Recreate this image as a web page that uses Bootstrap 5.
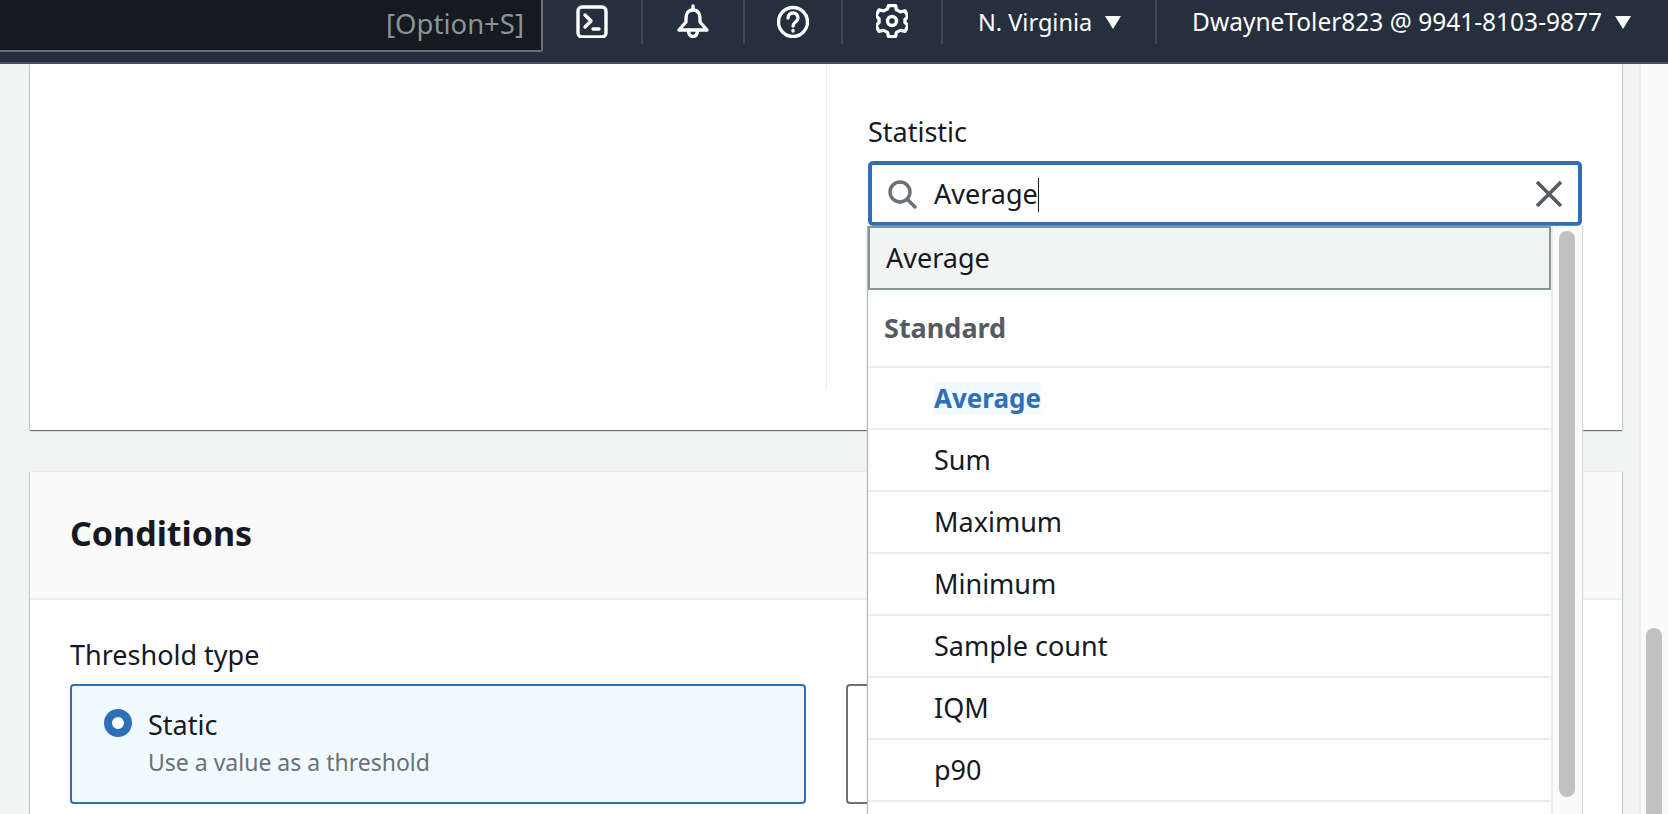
<!DOCTYPE html>
<html lang="en">
<head>
<meta charset="utf-8">
<title>Create alarm</title>
<link rel="stylesheet" href="https://cdn.jsdelivr.net/npm/bootstrap@5.3.0/dist/css/bootstrap.min.css">
<style>
html,body{height:814px;overflow:hidden}
body{font-family:"Noto Sans","Open Sans",sans-serif;font-size:27px;color:#16191f;background:#f2f3f3}
.top-bar{height:64px;background:#252f3e;border-bottom:2px solid #4a5360;color:#fff}
.search-stub{width:543px;height:52px;background:#16191f;border:2px solid #687078;border-width:0 2px 2px 0;border-bottom-right-radius:3px;color:#879596;padding-right:17px;padding-bottom:2px;font-size:27.5px}
.bar-cell{height:44px;border-right:2px solid #414750}
.bar-w1{width:100px}.bar-w2{width:102px}.bar-w3{width:98px}.bar-w4{width:100px}.bar-w5{width:214px;padding-left:35px}
.bar-user{flex:1;height:44px}
.bar-text{font-size:23.5px;line-height:44px;white-space:nowrap}
.bar-name{font-size:24.5px;padding-left:35px}
.caret-down{width:0;height:0;border-left:8.5px solid transparent;border-right:8.5px solid transparent;border-top:13px solid #fff;margin-left:13px}
.page-area{height:750px;overflow:hidden}
.main-col{flex:1;padding:0 17px 0 30px;min-width:0}
.page-track{width:29px;background:#fafafa;border-left:2px solid #eaeded}
.page-thumb{width:16px;height:200px;margin:564px 0 0 5px;background:#c1c1c1;border-radius:8px}
.sheet{background:#fff;box-shadow:0 1px 1px 0 #687078,-1px 0 1px 0 #d5dbdb,1px 0 1px 0 #d5dbdb}
.sheet-top{height:366px;margin-bottom:42px}
.left-half{width:797px;height:326px;border-right:1px solid #eaeded}
.right-half{flex:1;padding:50px 40px 0 41px}
.field-label{line-height:36px;margin-bottom:11px}
.combo{height:65px;border:4px solid #2f6fb5;border-radius:5px;background:#fff;padding:0 15px}
.combo-text{margin-left:17px;line-height:36px;flex:1}
.caret-bar{display:inline-block;width:1.5px;height:34px;background:#16191f;vertical-align:-8px}
.drop{position:absolute;left:0;right:0;top:100%;height:700px;background:#fff;z-index:5;box-shadow:-1px 0 1px #aab7b8,1px 0 1px #d5dbdb}
.drop-list{flex:1;min-width:0}
.drop-filter{height:64px;background:#f2f3f3;border:2px solid #879596;padding-left:16px;line-height:60px}
.drop-group{height:78px;padding:0 0 0 16px;line-height:76px;font-weight:700;color:#545b64;border-bottom:2px solid #eaeded}
.drop-item{height:62px;padding-left:66px;line-height:60px;border-bottom:2px solid #eaeded}
.item-hit{background:#f1faff;color:#2f6fb5;font-weight:700;font-size:26px;display:inline-block;line-height:32px}
.drop-track{width:31px;background:#fafafa;border-left:2px solid #eaeded;flex:none}
.drop-thumb{width:16px;height:566px;margin:5px 0 0 6px;background:#c1c1c1;border-radius:8px}
.sheet-head{height:128px;background:#fafafa;border-bottom:2px solid #eaeded;padding:0 40px 4px;font-size:34px;font-weight:700}
.sheet-body{padding:37px 40px 0;height:400px}
.field-gap{margin-bottom:11px}
.pick-row{gap:40px}
.pick-box{width:736px;height:120px;border:2px solid #2f6fb5;border-radius:4px;background:#f1faff;padding:11px 32px}
.pick-off{background:#fff;border-color:#687078;flex:1;width:auto}
.pick-dot{width:28px;height:28px;border-radius:50%;border:8px solid #2f6fb5;background:#fff;flex:none;margin-top:12px;margin-right:16px}
.pick-title{line-height:36px;margin-top:10px}
.pick-sub{font-size:23px;line-height:38px;color:#687078}
</style>
</head>
<body>
<header class="top-bar d-flex align-items-start">
  <div class="search-stub d-flex align-items-center justify-content-end">[Option+S]</div>
  <div class="bar-cell bar-w1 d-flex justify-content-center">
    <svg width="32" height="34" viewBox="0 0 32 34" class="mt-1" fill="none" stroke="#fff" stroke-width="3.4" stroke-linecap="round" stroke-linejoin="round"><rect x="2" y="3" width="28" height="30" rx="4"/><path d="M9 11l6 6-6 6M17 25h6"/></svg>
  </div>
  <div class="bar-cell bar-w2 d-flex justify-content-center">
    <svg width="32" height="34" viewBox="0 0 32 34" class="mt-1" fill="none" stroke="#fff" stroke-width="3.4" stroke-linecap="round" stroke-linejoin="round"><path d="M16 2v4M16 6c-5 0-7 4-7 8v4l-7 8h28l-7-8v-4c0-4-2-8-7-8z"/><path d="M11.500 26c0 4 1.500 6.500 4.500 6.500s4.500-2.500 4.500-6.500"/></svg>
  </div>
  <div class="bar-cell bar-w3 d-flex justify-content-center">
    <svg width="32" height="34" viewBox="0 0 32 34" class="mt-1" fill="none" stroke="#fff" stroke-width="3.4" stroke-linecap="round" stroke-linejoin="round"><circle cx="16" cy="18" r="14.5"/><path d="M11 14c0-3 2-5 5-5s5 2 5 5c0 4-5 4-5 8"/><path d="M16 26.5v.5"/></svg>
  </div>
  <div class="bar-cell bar-w4 d-flex justify-content-center">
    <svg width="32" height="34" viewBox="0 0 32 34" class="mt-1" fill="none" stroke="#fff" stroke-width="3.4" stroke-linejoin="round"><path d="M12.500 4h7l1 4.500 4 2.300 4.500-1.300 3 6.500-3 3v3.500l3 3-3 6.500-4.500-1.300-4 2.300-1 4.500h-7l-1-4.500-4-2.300-4.500 1.300-3-6.500 3-3V18l-3-3 3-6.500 4.500 1.300 4-2.300z" transform="translate(0 -2) scale(1 .92)"/><circle cx="16" cy="17" r="4.500"/></svg>
  </div>
  <div class="bar-cell bar-w5 d-flex align-items-center bar-text">N. Virginia<span class="caret-down"></span></div>
  <div class="bar-user d-flex align-items-center bar-text bar-name">DwayneToler823 @ 9941-8103-9877<span class="caret-down"></span></div>
</header>
<div class="page-area d-flex">
  <main class="main-col">
    <section class="sheet sheet-top d-flex">
      <div class="left-half"></div>
      <div class="right-half">
        <div class="field-label">Statistic</div>
        <div class="position-relative">
          <div class="combo d-flex align-items-center">
            <svg width="30" height="30" viewBox="0 0 30 30" fill="none" stroke="#687078" stroke-width="3.4" stroke-linecap="round"><circle cx="13" cy="13" r="10"/><path d="M21 21l7 7"/></svg>
            <div class="combo-text">Average<span class="caret-bar"></span></div>
            <svg width="28" height="28" viewBox="0 0 28 28" stroke="#545b64" stroke-width="3.6" fill="none"><path d="M2 2l24 24M26 2L2 26"/></svg>
          </div>
          <div class="drop d-flex">
            <div class="drop-list">
              <div class="drop-filter">Average</div>
              <div class="drop-group">Standard</div>
              <div class="drop-item"><span class="item-hit">Average</span></div>
              <div class="drop-item">Sum</div>
              <div class="drop-item">Maximum</div>
              <div class="drop-item">Minimum</div>
              <div class="drop-item">Sample count</div>
              <div class="drop-item">IQM</div>
              <div class="drop-item">p90</div>
            </div>
            <div class="drop-track"><div class="drop-thumb"></div></div>
          </div>
        </div>
      </div>
    </section>
    <section class="sheet">
      <div class="sheet-head d-flex align-items-center">Conditions</div>
      <div class="sheet-body">
        <div class="field-label field-gap">Threshold type</div>
        <div class="d-flex pick-row">
          <div class="pick-box d-flex">
            <span class="pick-dot"></span>
            <div><div class="pick-title">Static</div><div class="pick-sub">Use a value as a threshold</div></div>
          </div>
          <div class="pick-box pick-off"></div>
        </div>
      </div>
    </section>
  </main>
  <aside class="page-track"><div class="page-thumb"></div></aside>
</div>
<script src="https://cdn.jsdelivr.net/npm/bootstrap@5.3.0/dist/js/bootstrap.bundle.min.js"></script>
</body>
</html>
